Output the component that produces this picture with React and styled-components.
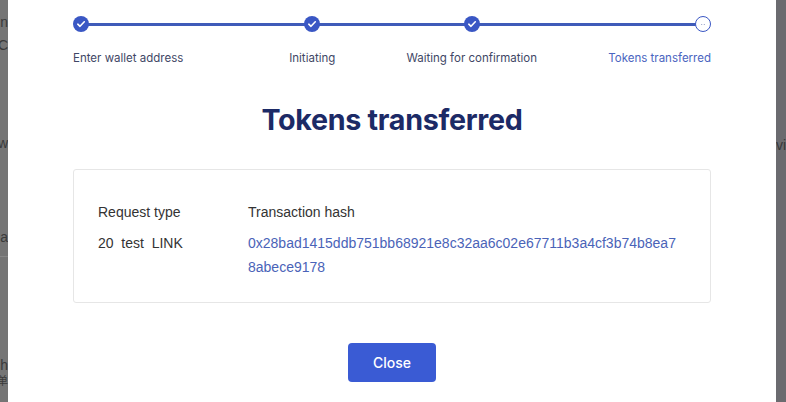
import React from 'react';
import styled, { createGlobalStyle } from 'styled-components';

const GlobalStyle = createGlobalStyle`
  html, body {
    margin: 0;
    padding: 0;
    background: #737373;
    overflow: hidden;
  }
  * { box-sizing: border-box; }
`;

const Page = styled.div`
  display: flex;
  width: 786px;
  height: 402px;
  overflow: hidden;
`;

const Side = styled.div`
  width: ${p => p.$w}px;
  flex: none;
  background: ${p => p.$bg};
  display: flex;
  flex-direction: column;
  align-items: ${p => (p.$left ? 'flex-end' : 'flex-start')};
  overflow: hidden;
  font-family: 'Liberation Sans', Arial, 'Noto Sans CJK SC', sans-serif;
  font-size: 14px;
  color: #2c2c2c;
`;

const Frag = styled.div`
  flex: none;
  white-space: nowrap;
  height: ${p => p.$h}px;
  line-height: ${p => p.$h}px;
  font-size: ${p => p.$fs || 14}px;
  border-bottom: ${p => (p.$rule ? '1px solid #8c8c8c' : 'none')};
  opacity: 0.8;
`;

const Modal = styled.div`
  width: 768px;
  flex: none;
  background: #fff;
  padding: 16px 65px 0;
  font-family: 'Liberation Sans', Arial, sans-serif;
`;

const Steps = styled.div`
  position: relative;
  display: grid;
  grid-template-columns: repeat(4, 1fr);

  &::before {
    content: '';
    position: absolute;
    left: 8px;
    right: 8px;
    top: 7px;
    height: 3px;
    background: #3f5bb9;
  }
`;

const Step = styled.div`
  position: relative;
  display: flex;
  flex-direction: column;
  align-items: ${p => p.$align};
`;

const Dot = styled.div`
  width: 16px;
  height: 16px;
  border-radius: 50%;
  display: flex;
  align-items: center;
  justify-content: center;
  background: ${p => (p.$done ? '#3a57c4' : '#fff')};
  border: ${p => (p.$done ? 'none' : '1.5px solid #3a57c4')};
`;

const StepLabel = styled.div`
  margin-top: 19px;
  font-family: Inter, 'Noto Sans', sans-serif;
  font-size: 11.5px;
  color: ${p => (p.$active ? '#4a64c0' : '#3f4766')};
  white-space: nowrap;
`;

const Title = styled.h1`
  margin: 37px 0 0;
  text-align: center;
  font-family: Inter, 'Noto Sans', sans-serif;
  font-weight: 700;
  font-size: 28.7px;
  letter-spacing: -0.3px;
  color: #1c2a66;
`;

const Card = styled.div`
  margin-top: 32px;
  border: 1px solid #e6e6e6;
  border-radius: 3px;
  padding: 30px 30px 23px 24px;
  display: grid;
  grid-template-columns: 150px 1fr;
  row-gap: 7px;
  font-size: 14px;
  line-height: 24px;
  color: #333;
`;

const Cell = styled.div`
  color: ${p => (p.$link ? '#4a63b8' : '#333')};
  word-break: break-all;
  white-space: ${p => (p.$pre ? 'pre' : 'normal')};
`;

const Footer = styled.div`
  display: flex;
  justify-content: center;
  margin-top: 40px;
`;

const Button = styled.button`
  width: 88px;
  height: 39px;
  border: 0;
  border-radius: 4px;
  background: #3a5bd4;
  color: #fff;
  font-family: Inter, 'Noto Sans', sans-serif;
  font-size: 14px;
  font-weight: 500;
  cursor: pointer;
`;

function Check() {
  return (
    <svg width="10" height="10" viewBox="0 0 10 10">
      <path d="M1.8 5.2 L4 7.3 L8.3 2.8" fill="none" stroke="#fff" strokeWidth="1.6" strokeLinecap="round" strokeLinejoin="round" />
    </svg>
  );
}

function Pending() {
  return (
    <svg width="10" height="10" viewBox="0 0 10 10">
      <circle cx="3.7" cy="5.5" r="0.6" fill="#8a95c0" />
      <circle cx="6.3" cy="5.5" r="0.6" fill="#8a95c0" />
    </svg>
  );
}

const steps = [
  { label: 'Enter wallet address', align: 'flex-start', done: true },
  { label: 'Initiating', align: 'center', done: true },
  { label: 'Waiting for confirmation', align: 'center', done: true },
  { label: 'Tokens transferred', align: 'flex-end', done: false },
];

export default function App() {
  return (
    <Page>
      <GlobalStyle />
      <Side $w={8} $bg="#757575" $left>
        <Frag $h={12} />
        <Frag $h={20}>Domain</Frag>
        <Frag $h={26}>BTC</Frag>
        <Frag $h={72} />
        <Frag $h={26}>Withdraw</Frag>
        <Frag $h={61} $rule />
        <Frag $h={40} $rule>Rebecca</Frag>
        <Frag $h={62} $rule />
        <Frag $h={37} />
        <Frag $h={18}>Search</Frag>
        <Frag $h={14} $fs={11}>简单</Frag>
      </Side>
      <Modal>
        <Steps>
          {steps.map(s => (
            <Step key={s.label} $align={s.align}>
              <Dot $done={s.done}>{s.done ? <Check /> : <Pending />}</Dot>
              <StepLabel $active={!s.done}>{s.label}</StepLabel>
            </Step>
          ))}
        </Steps>
        <Title>Tokens transferred</Title>
        <Card>
          <Cell>Request type</Cell>
          <Cell>Transaction hash</Cell>
          <Cell $pre>20  test  LINK</Cell>
          <Cell $link>0x28bad1415ddb751bb68921e8c32aa6c02e67711b3a4cf3b74b8ea78abece9178</Cell>
        </Card>
        <Footer>
          <Button>Close</Button>
        </Footer>
      </Modal>
      <Side $w={10} $bg="#6b6b6f">
        <Frag $h={131} />
        <Frag $h={28}>view</Frag>
      </Side>
    </Page>
  );
}
